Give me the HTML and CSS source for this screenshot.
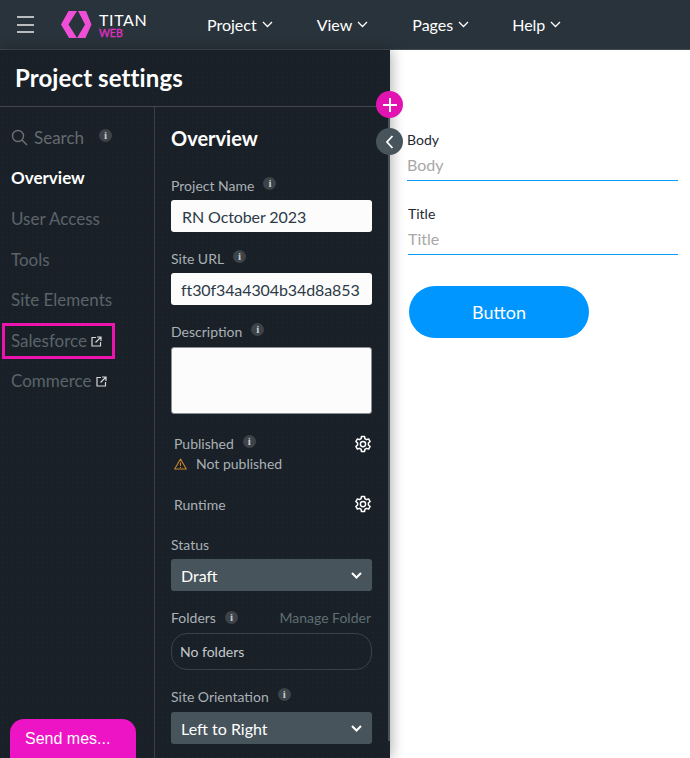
FILE: index.html
```html
<!DOCTYPE html>
<html lang="en">
<head>
<meta charset="utf-8">
<title>Project settings</title>
<link rel="stylesheet" href="styles.css">
</head>
<body>
<div class="app">
  <header class="topbar">
    <button class="burger" aria-label="Menu"><span></span><span></span><span></span></button>
    <div class="logo">
      <svg class="logo-mark" width="32" height="28" viewBox="0 0 32 28"><path fill="#ee4fd6" d="M7.500 0H16L7.500 13.500 16 27H8L0 13.500Z"/><path fill="#ee4fd6" d="M17 0H25L30.500 13.500 24.500 27H16L24 13.500Z"/></svg>
      <div class="logo-text"><span class="logo-name">TITAN</span><span class="logo-sub">WEB</span></div>
    </div>
    <nav class="menu">
      <a class="menu-item menu-project">Project<svg width="11" height="7" viewBox="0 0 11 7"><path d="M1 1l4.500 4.500L10 1" fill="none" stroke="#fff" stroke-width="1.300"/></svg></a>
      <a class="menu-item menu-view">View<svg width="11" height="7" viewBox="0 0 11 7"><path d="M1 1l4.500 4.500L10 1" fill="none" stroke="#fff" stroke-width="1.300"/></svg></a>
      <a class="menu-item menu-pages">Pages<svg width="11" height="7" viewBox="0 0 11 7"><path d="M1 1l4.500 4.500L10 1" fill="none" stroke="#fff" stroke-width="1.300"/></svg></a>
      <a class="menu-item">Help<svg width="11" height="7" viewBox="0 0 11 7"><path d="M1 1l4.500 4.500L10 1" fill="none" stroke="#fff" stroke-width="1.300"/></svg></a>
    </nav>
  </header>
  <main class="main">
    <aside class="panel">
      <h1 class="panel-title">Project settings</h1>
      <div class="panel-body">
        <nav class="side">
          <div class="side-item side-search">
            <svg width="17" height="17" viewBox="0 0 17 17"><circle cx="7" cy="7" r="5.500" fill="none" stroke="#6b7176" stroke-width="1.400"/><path d="M11 11l5 5" stroke="#6b7176" stroke-width="1.400"/></svg>
            <span class="search-text">Search</span><i class="info info-search">i</i>
          </div>
          <div class="side-item active">Overview</div>
          <div class="side-item">User Access</div>
          <div class="side-item">Tools</div>
          <div class="side-item">Site Elements</div>
          <div class="side-item outlined">Salesforce<svg class="ext" width="11" height="11" viewBox="0 0 11 11"><path d="M5 1.500H1V10H9.500V6M6 1h4v4M10 1L4.500 6.500" fill="none" stroke="#d5d8da" stroke-width="1.200"/></svg></div>
          <div class="side-item">Commerce<svg class="ext" width="11" height="11" viewBox="0 0 11 11"><path d="M5 1.500H1V10H9.500V6M6 1h4v4M10 1L4.500 6.500" fill="none" stroke="#d5d8da" stroke-width="1.200"/></svg></div>
        </nav>
        <section class="content">
          <h2 class="heading">Overview</h2>
          <div class="label lbl-first">Project Name<i class="info">i</i></div>
          <div class="field">RN October 2023</div>
          <div class="label lbl-url">Site URL<i class="info">i</i></div>
          <div class="field">ft30f34a4304b34d8a853</div>
          <div class="label lbl-desc">Description<i class="info">i</i></div>
          <div class="textarea"></div>
          <div class="setting set-pub">
            <div>
              <div class="setting-name">Published<i class="info">i</i></div>
              <div class="warn"><svg width="13" height="12" viewBox="0 0 13 12"><path d="M6.500 1L12.300 11H.7Z" fill="none" stroke="#c9842c" stroke-width="1.100" stroke-linejoin="round"/><path d="M6.500 4.500V8M6.500 9V10" stroke="#c9842c" stroke-width="1.100"/></svg><span>Not published</span></div>
            </div>
            <svg class="gear" width="18" height="18" viewBox="0 0 24 24"><path fill="none" stroke="#fff" stroke-width="2" stroke-linejoin="round" d="M10 2h4l.6 3a7.500 7.500 0 0 1 2 1.200l2.900-1 2 3.500-2.300 2a7.500 7.500 0 0 1 0 2.600l2.300 2-2 3.500-2.900-1a7.500 7.500 0 0 1-2 1.200L14 22h-4l-.6-3a7.500 7.500 0 0 1-2-1.200l-2.900 1-2-3.500 2.300-2a7.500 7.500 0 0 1 0-2.600l-2.300-2 2-3.500 2.900 1a7.500 7.500 0 0 1 2-1.200Z"/><circle cx="12" cy="12" r="3.500" fill="none" stroke="#fff" stroke-width="2"/></svg>
          </div>
          <div class="setting set-run">
            <div class="setting-name">Runtime</div>
            <svg class="gear" width="18" height="18" viewBox="0 0 24 24"><path fill="none" stroke="#fff" stroke-width="2" stroke-linejoin="round" d="M10 2h4l.6 3a7.500 7.500 0 0 1 2 1.200l2.900-1 2 3.500-2.300 2a7.500 7.500 0 0 1 0 2.600l2.300 2-2 3.500-2.900-1a7.500 7.500 0 0 1-2 1.200L14 22h-4l-.6-3a7.500 7.500 0 0 1-2-1.200l-2.900 1-2-3.500 2.300-2a7.500 7.500 0 0 1 0-2.600l-2.300-2 2-3.500 2.900 1a7.500 7.500 0 0 1 2-1.200Z"/><circle cx="12" cy="12" r="3.500" fill="none" stroke="#fff" stroke-width="2"/></svg>
          </div>
          <div class="label lbl-status">Status</div>
          <div class="select">Draft<svg width="11" height="7" viewBox="0 0 11 7"><path d="M1 1l4.500 4.500L10 1" fill="none" stroke="#fff" stroke-width="2"/></svg></div>
          <div class="label lbl-folders"><span>Folders<i class="info">i</i></span><a class="manage">Manage Folder</a></div>
          <div class="folders">No folders</div>
          <div class="label lbl-orient">Site Orientation<i class="info">i</i></div>
          <div class="select">Left to Right<svg width="11" height="7" viewBox="0 0 11 7"><path d="M1 1l4.500 4.500L10 1" fill="none" stroke="#fff" stroke-width="2"/></svg></div>
        </section>
        <div class="scrollbar"></div>
      </div>
      <button class="fab fab-add" aria-label="Add"><svg width="14" height="14" viewBox="0 0 14 14"><path d="M7 0v14M0 7h14" stroke="#fff" stroke-width="2"/></svg></button>
      <button class="fab fab-back" aria-label="Collapse"><svg width="8" height="14" viewBox="0 0 8 14"><path d="M6.500 1L1 7l5.500 6" fill="none" stroke="#fff" stroke-width="1.800"/></svg></button>
      <div class="chat">Send mes...</div>
    </aside>
    <section class="canvas">
      <div class="cv-field cv-body">
        <div class="cv-label">Body</div>
        <div class="cv-input">Body</div>
      </div>
      <div class="cv-field cv-title">
        <div class="cv-label">Title</div>
        <div class="cv-input">Title</div>
      </div>
      <button class="cv-button">Button</button>
    </section>
  </main>
</div>
</body>
</html>
```

FILE: styles.css
```css
* { box-sizing: border-box; }
html, body { margin: 0; padding: 0; }
body { font-family: Lato, "Liberation Sans", sans-serif; background: #fff; }
.app { width: 690px; height: 758px; display: flex; flex-direction: column; overflow: hidden; }

.topbar { height: 50px; flex: none; display: flex; align-items: center; background: #29333b; border-bottom: 1px solid #424a50; }
.burger { width: 17px; height: 17px; margin: 0 0 0 17px; padding: 0; border: 0; background: none; display: flex; flex-direction: column; justify-content: space-between; }
.burger span { display: block; height: 2px; background: #b9bdc0; }
.logo { display: flex; align-items: center; margin-left: 27px; width: 146px; }
.logo-mark { flex: none; }
.logo-text { display: flex; flex-direction: column; margin-left: 6px; margin-top: 1px; }
.logo-name { color: #fff; font-size: 16px; line-height: 17px; letter-spacing: .6px; }
.logo-sub { color: #e02fc4; font-size: 10.500px; line-height: 11px; font-weight: 400; -webkit-text-stroke: .3px #e02fc4; }
.menu { display: flex; align-items: center; }
.menu-item { display: flex; align-items: center; gap: 5px; color: #fff; font-size: 16px; }
.menu-project { margin-right: 44px; }
.menu-view { margin-right: 44px; }
.menu-pages { margin-right: 43px; }

.main { flex: 1; display: flex; min-height: 0; }
.panel { position: relative; width: 390px; flex: none; background-color: #1a2027; background-image: radial-gradient(#20282f 0.6px, transparent 0.8px); background-size: 5px 5px; box-shadow: 2px 0 12px rgba(0,0,0,.3); display: flex; flex-direction: column; }
.panel-title { margin: 0; height: 57px; flex: none; padding: 0 15px; font-size: 24px; letter-spacing: .1px; line-height: 56px; font-weight: 700; color: #fff; border-bottom: 1px solid #42484d; }
.panel-body { flex: 1; display: flex; min-height: 0; position: relative; }

.side { width: 155px; flex: none; border-right: 1px solid #3a4046; padding-top: 10px; position: relative; }
.side-item { height: 40.600px; display: flex; align-items: center; padding-left: 11px; font-size: 17px; color: #5b646b; white-space: nowrap; }
.side-item.active { color: #fff; font-weight: 700; }
.side-search { gap: 6px; }
.search-text { color: #646b70; }
.info-search { margin-left: 9px !important; }
.ext { margin-left: 4px; margin-top: 2px; }
.outlined { position: relative; }
.outlined::after { content: ""; box-sizing: border-box; position: absolute; left: 2px; top: 3px; width: 113px; height: 36px; border: 3px solid #ec14ac; }

.info { display: inline-flex; align-items: center; justify-content: center; width: 13px; height: 13px; border-radius: 50%; background: #3c4349; color: #c8ccce; font-size: 11px; font-style: normal; font-weight: 700; font-family: "Liberation Serif", serif; margin-left: 9px; position: relative; top: -2px; }

.content { flex: 1; padding: 0 18px 0 16px; min-width: 0; }
.heading { margin: 0; font-size: 20px; line-height: 24px; font-weight: 700; color: #fff; padding-top: 19px; }
.label { font-size: 14px; line-height: 17px; color: #a9b1b6; display: flex; align-items: center; }
.lbl-first { margin-top: 27px; margin-bottom: 6px; }
.lbl-url { margin-top: 18px; margin-bottom: 6px; }
.lbl-desc { margin-top: 18px; margin-bottom: 7px; }
.lbl-status { margin-top: 23px; margin-bottom: 6px; }
.lbl-folders { justify-content: space-between; margin-top: 18px; margin-bottom: 7px; }
.lbl-orient { margin-top: 18px; margin-bottom: 7px; }
.field { height: 32px; background: #fcfcfc; border-radius: 3px; padding: 0 11px; color: #2c3a47; font-size: 16px; letter-spacing: -.1px; line-height: 33px; overflow: hidden; white-space: nowrap; }
.field + .label + .field { padding: 0 10px; }
.textarea { height: 67px; background: #fcfcfc; border: 1px solid #8b9095; border-radius: 3px; }
.setting { display: flex; justify-content: space-between; padding-left: 3px; color: #a9b1b6; font-size: 14px; }
.setting-name { line-height: 17px; display: flex; align-items: center; }
.set-pub { margin-top: 21px; align-items: flex-start; }
.set-run { margin-top: 23px; align-items: center; }
.gear { margin-top: 0; }
.warn { display: flex; align-items: center; gap: 9px; margin-top: 3px; line-height: 17px; color: #a9b1b6; }
.select { height: 32px; background: #47545c; border-radius: 3px; padding: 0 10px; color: #fff; font-size: 16px; display: flex; align-items: center; justify-content: space-between; }
.manage { color: #5e6f73; margin-right: 1px; }
.folders { height: 37px; border: 1px solid #3a4248; border-radius: 16px; padding: 0 8px; color: #c4c9cc; font-size: 14px; line-height: 36px; }
.scrollbar { position: absolute; right: 0; top: 0; bottom: 17px; width: 2px; background: #4a5157; }

.fab { position: absolute; left: 376px; width: 27px; height: 27px; border: 0; border-radius: 50%; padding: 0; display: flex; align-items: center; justify-content: center; z-index: 3; }
.fab-add { top: 41px; background: #e213b0; }
.fab-back { top: 78px; background: #47545c; }
.chat { position: absolute; left: 10px; top: 669px; width: 126px; height: 39px; border-radius: 14px 14px 0 0; background: #ec14c4; color: #fff; font-family: "Liberation Sans", sans-serif; font-size: 16px; padding: 11px 15px 0; }

.canvas { flex: 1; padding: 0 12px 0 17px; min-width: 0; }
.cv-field { border-bottom: 1px solid #0b9cf5; height: 50px; }
.cv-body { margin-top: 81px; }
.cv-title { margin-top: 24px; margin-left: 1px; }
.cv-label { font-size: 14px; line-height: 17px; color: #1d2833; }
.cv-input { font-size: 16px; line-height: 20px; color: #a8a8a8; margin-top: 7px; }
.cv-button { display: block; margin: 31px 0 0 2px; width: 180px; height: 52px; border: 0; border-radius: 26px; background: #0096ff; color: #fff; font-family: Lato, sans-serif; font-size: 18px; }
```
